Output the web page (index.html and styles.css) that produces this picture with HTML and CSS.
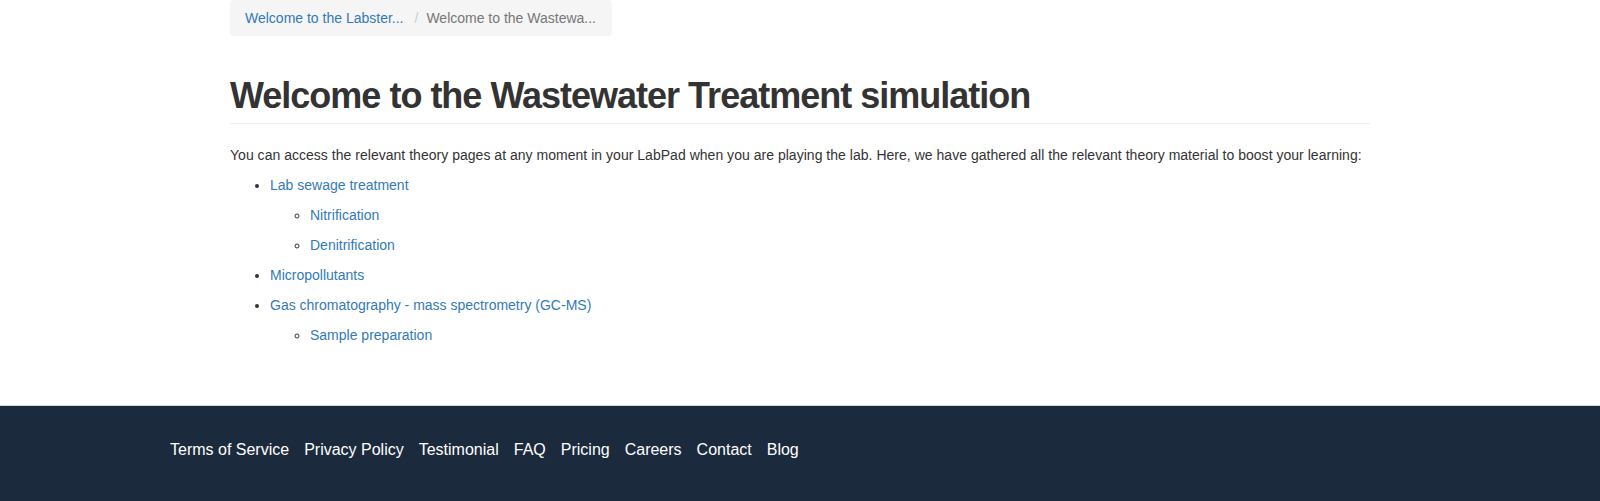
FILE: index.html
```html
<!DOCTYPE html>
<html>
<head>
<meta charset="utf-8">
<title>Welcome to the Wastewater Treatment simulation</title>
<link rel="stylesheet" href="styles.css">
</head>
<body>
<div class="page">
  <main class="container">
    <ol class="breadcrumb">
      <li><a href="#">Welcome to the Labster...</a></li>
      <li class="active">Welcome to the Wastewa...</li>
    </ol>
    <div class="page-header">
      <h1>Welcome to the Wastewater Treatment simulation</h1>
    </div>
    <p class="intro">You can access the relevant theory pages at any moment in your LabPad when you are playing the lab. Here, we have gathered all the relevant theory material to boost your learning:</p>
    <ul class="toc">
      <li><a href="#">Lab sewage treatment</a>
        <ul class="toc-sub">
          <li><a href="#">Nitrification</a></li>
          <li><a href="#">Denitrification</a></li>
        </ul>
      </li>
      <li><a href="#">Micropollutants</a></li>
      <li><a href="#">Gas chromatography - mass spectrometry (GC-MS)</a>
        <ul class="toc-sub">
          <li><a href="#">Sample preparation</a></li>
        </ul>
      </li>
    </ul>
  </main>
  <footer class="footer">
    <nav class="footer-nav">
      <a href="#">Terms of Service</a>
      <a href="#">Privacy Policy</a>
      <a href="#">Testimonial</a>
      <a href="#">FAQ</a>
      <a href="#">Pricing</a>
      <a href="#">Careers</a>
      <a href="#">Contact</a>
      <a href="#">Blog</a>
    </nav>
  </footer>
</div>
</body>
</html>
```

FILE: styles.css
```css
* { box-sizing: border-box; }
html, body { margin: 0; padding: 0; background: #fff; }
body {
  font-family: "Liberation Sans", Arial, Helvetica, sans-serif;
  font-size: 14px;
  line-height: 20px;
  color: #333;
}
a { color: #337ab7; text-decoration: none; }

.container {
  width: 1170px;
  margin: 0 auto;
  padding: 0 15px 50px;
}

.breadcrumb {
  display: flex;
  width: 382px;
  list-style: none;
  margin: 0 0 40px;
  padding: 8px 15px;
  background: #f5f5f5;
  border-radius: 4px;
  white-space: nowrap;
}
.breadcrumb li { color: #777; }
.breadcrumb li + li::before {
  content: "/";
  color: #ccc;
  padding: 0 8px 0 11px;
}

.page-header {
  border-bottom: 1px solid #eee;
  padding-bottom: 7px;
  margin: 0 0 21px;
}
.page-header h1 {
  margin: 0;
  font-size: 36px;
  line-height: 40px;
  font-weight: 700;
  color: #333;
  letter-spacing: -1px;
}

.intro { margin: 0; letter-spacing: 0.025px; }

.toc {
  margin: 0 0 10px;
  padding-left: 40px;
  list-style: disc;
}
.toc li { margin-top: 10px; }
.toc-sub {
  margin: 0;
  padding-left: 40px;
  list-style: circle;
}

.footer {
  background: #1b2a3c;
  border-top: 1px solid #d6d6d6;
  height: 97px;
}
.footer-nav {
  display: flex;
  gap: 15px;
  padding: 34px 0 0 170px;
}
.footer-nav a {
  color: #fff;
  font-size: 16px;
  line-height: 20px;
}
```
